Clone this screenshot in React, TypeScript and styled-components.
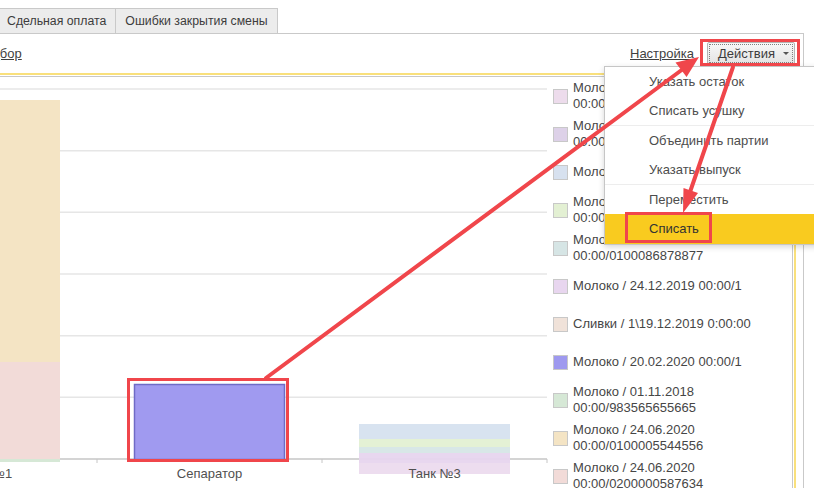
import React from 'react';
import styled, { createGlobalStyle } from 'styled-components';

const RED = '#f0464b';

const legendItems = [
  { color: '#eddcec', text: 'Молоко / 24.06.2020 00:00/0300000587634' },
  { color: '#ddd1e8', text: 'Молоко / 10.03.2020 00:00/0100005544557' },
  { color: '#d7e1ef', text: 'Молоко / 15.01.2020 00:00/1' },
  { color: '#e3f0d3', text: 'Молоко / 12.02.2020 00:00/0200000587600' },
  { color: '#d6e5e5', text: 'Молоко / 05.02.2020 00:00/0100086878877' },
  { color: '#e8d6ef', text: 'Молоко / 24.12.2019 00:00/1' },
  { color: '#f0e2d9', text: 'Сливки / 1\\19.12.2019 0:00:00' },
  { color: '#9e99ef', text: 'Молоко / 20.02.2020 00:00/1' },
  { color: '#d6e8d6', text: 'Молоко / 01.11.2018 00:00/983565655665' },
  { color: '#f4e4c4', text: 'Молоко / 24.06.2020 00:00/0100005544556' },
  { color: '#f2dbd8', text: 'Молоко / 24.06.2020 00:00/0200000587634' },
];

const menuGroups = [
  ['Указать остаток', 'Списать усушку'],
  ['Объединить партии', 'Указать выпуск'],
  ['Переместить', 'Списать'],
];

const GRID = [12, 73.7, 135.3, 197, 258.7, 320.3];
const AXIS_Y = 382;

const tank3Bands = [
  { y: 347, h: 15, color: '#d6e1ef' },
  { y: 362, h: 8, color: '#e3f0d3' },
  { y: 370, h: 6, color: '#d6e6e6' },
  { y: 376, h: 10, color: '#e7d5ee' },
  { y: 386, h: 11, color: '#ecdbee' },
];

const GlobalStyle = createGlobalStyle`
  html, body {
    margin: 0;
    padding: 0;
    background: #fff;
  }
  body {
    font-family: 'Liberation Sans', Arial, sans-serif;
    font-size: 13px;
    color: #444;
    overflow: hidden;
  }
`;

const Page = styled.div`
  position: relative;
  width: 814px;
  height: 488px;
  overflow: hidden;
  background: #fff;
`;

const TabStrip = styled.div`
  display: flex;
  align-items: flex-end;
  height: 33px;
`;

const Tab = styled.div<{ $first?: boolean }>`
  height: 24px;
  line-height: 24px;
  padding: 0 9px;
  margin-left: ${(p) => (p.$first ? '-3px' : '0')};
  border: 1px solid #c9c9c9;
  border-bottom: none;
  border-left: ${(p) => (p.$first ? '1px solid #c9c9c9' : 'none')};
  background: #ececec;
  color: #3c3c3c;
  font-size: 12.3px;
  white-space: nowrap;
`;

const Frame = styled.div`
  width: 803px;
  height: 454px;
  border-top: 1px solid #c9c9c9;
  border-right: 1px solid #c9c9c9;
`;

const Toolbar = styled.div`
  display: flex;
  align-items: flex-start;
  height: 42px;
  box-sizing: border-box;
  padding: 8px 8px 0 0;
`;

const Link = styled.a<{ $cut?: boolean }>`
  line-height: 23px;
  color: #3f3f3f;
  text-decoration: underline;
  margin-left: ${(p) => (p.$cut ? '-24px' : '0')};
  margin-right: ${(p) => (p.$cut ? 'auto' : '13px')};
  cursor: pointer;
`;

const ActionsButton = styled.button`
  display: flex;
  align-items: center;
  height: 23px;
  width: 88px;
  padding: 0 0 0 10px;
  box-sizing: border-box;
  border: 1px solid #b4b4b4;
  border-radius: 2px;
  background: linear-gradient(#f8f8f8, #e3e3e3);
  outline: 1px dotted #808080;
  outline-offset: -3px;
  font-family: 'Liberation Sans', Arial, sans-serif;
  font-size: 13px;
  color: #3c3c3c;
`;

const Caret = styled.span`
  margin-left: 8px;
  width: 0;
  height: 0;
  border-left: 3px solid transparent;
  border-right: 3px solid transparent;
  border-top: 3px solid #555;
`;

const Field = styled.div`
  display: flex;
  width: 792px;
  height: 420px;
  border-top: 1px solid #c8c8c8;
  border-right: 1px solid #c8c8c8;
  outline: 2px solid #f9e07c;
  outline-offset: 1px;
`;

const ChartSvg = styled.svg`
  flex-shrink: 0;
  display: block;
  font-family: 'Liberation Sans', Arial, sans-serif;
  font-size: 13px;
`;

const Legend = styled.div`
  flex: 1;
  display: flex;
  flex-direction: column;
  padding-left: 5px;
`;

const LegendItem = styled.div`
  display: flex;
  align-items: center;
  height: 38px;
  flex-shrink: 0;
`;

const Swatch = styled.span<{ $color: string }>`
  width: 15px;
  height: 15px;
  box-sizing: border-box;
  border: 1px solid #c8c8c8;
  background: ${(p) => p.$color};
  margin-right: 5px;
  flex-shrink: 0;
`;

const LegendText = styled.span`
  max-width: 205px;
  line-height: 16px;
  color: #464646;
`;

const Menu = styled.div`
  position: absolute;
  left: 604px;
  top: 66px;
  width: 232px;
  background: #fff;
  border: 1px solid #c6c6c6;
  box-shadow: 0 2px 6px rgba(0, 0, 0, 0.16);
  z-index: 5;
`;

const MenuItem = styled.div<{ $active?: boolean }>`
  height: ${(p) => (p.$active ? 30 : 29)}px;
  line-height: ${(p) => (p.$active ? 30 : 29)}px;
  padding-left: 44px;
  background: ${(p) => (p.$active ? '#f9cb1f' : 'transparent')};
  color: ${(p) => (p.$active ? '#333' : '#4d4d4d')};
  white-space: nowrap;
`;

const MenuSeparator = styled.div`
  height: 1px;
  background: #ededed;
`;

const Overlay = styled.svg`
  position: absolute;
  left: 0;
  top: 0;
  z-index: 10;
  pointer-events: none;
`;

const Chart = () => (
  <ChartSvg width={548} height={411} viewBox="0 0 548 411">
    {GRID.map((y) => (
      <line key={y} x1={0} x2={547} y1={y} y2={y} stroke="#e6e6e6" strokeWidth={1.5} />
    ))}
    <line x1={0} x2={547} y1={AXIS_Y} y2={AXIS_Y} stroke="#c6c6c6" strokeWidth={1.5} />
    {[97, 322, 547].map((x) => (
      <line key={x} x1={x} x2={x} y1={AXIS_Y} y2={AXIS_Y + 4} stroke="#c6c6c6" strokeWidth={1} />
    ))}

    {/* Танк №1 */}
    <rect x={-91} y={23} width={151} height={262} fill="#f4e4c4" />
    <rect x={-91} y={285} width={151} height={97} fill="#f2dbd8" />
    <rect x={-91} y={382} width={151} height={3} fill="#d6e8d6" />

    {/* Сепаратор */}
    <rect x={134.5} y={307.5} width={150} height={75} fill="#a09af0" stroke="#6f6bc6" strokeWidth={1.5} />

    {/* Танк №3 */}
    {tank3Bands.map((b) => (
      <rect key={b.y} x={359} y={b.y} width={151} height={b.h} fill={b.color} opacity={0.95} />
    ))}

    <g fill="#505050" textAnchor="middle">
      <text x={-14} y={401}>Танк №1</text>
      <text x={209.5} y={401}>Сепаратор</text>
      <text x={434.5} y={401}>Танк №3</text>
    </g>
  </ChartSvg>
);

const Annotations = () => (
  <Overlay width={814} height={488} viewBox="0 0 814 488">
    <g fill="none" stroke={RED} strokeWidth={3}>
      <rect x={701.5} y={40.5} width={97} height={24} />
      <rect x={626.5} y={213.5} width={84} height={28} />
      <rect x={128.5} y={379.5} width={159} height={81} />
    </g>
    <g stroke={RED} strokeWidth={4} strokeLinecap="round">
      <line x1={266} y1={378} x2={683} y2={69} />
      <line x1={733} y1={67} x2={690} y2={192} />
    </g>
    <g fill={RED}>
      <polygon points="699,57 686.6,77 675.5,62.5" />
      <polygon points="683,213 698,193 683.5,188" />
    </g>
  </Overlay>
);

export default function App() {
  return (
    <Page>
      <GlobalStyle />
      <TabStrip>
        <Tab $first>Сдельная оплата</Tab>
        <Tab>Ошибки закрытия смены</Tab>
      </TabStrip>
      <Frame>
        <Toolbar>
          <Link $cut>Подбор</Link>
          <Link>Настройка</Link>
          <ActionsButton>
            Действия
            <Caret />
          </ActionsButton>
        </Toolbar>
        <Field>
          <Chart />
          <Legend>
            {legendItems.map((item) => (
              <LegendItem key={item.text}>
                <Swatch $color={item.color} />
                <LegendText>{item.text}</LegendText>
              </LegendItem>
            ))}
          </Legend>
        </Field>
      </Frame>

      <Menu>
        {menuGroups.map((group, gi) => (
          <React.Fragment key={gi}>
            {gi > 0 && <MenuSeparator />}
            {group.map((label) => (
              <MenuItem key={label} $active={label === 'Списать'}>
                {label}
              </MenuItem>
            ))}
          </React.Fragment>
        ))}
      </Menu>

      <Annotations />
    </Page>
  );
}
